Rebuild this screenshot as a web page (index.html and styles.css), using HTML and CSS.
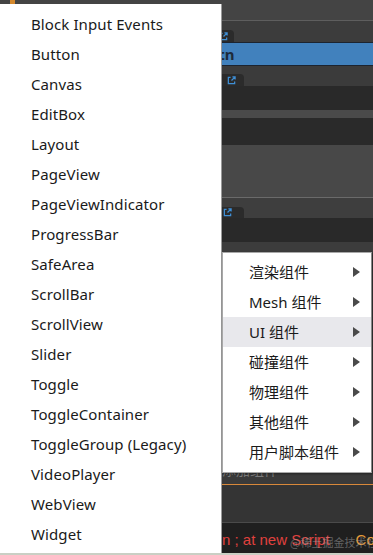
FILE: index.html
```html
<!DOCTYPE html>
<html lang="zh-CN">
<head>
    <meta charset="UTF-8">
    <meta name="viewport" content="width=device-width, initial-scale=1.0">
    <title>Add Component Menu</title>
    <link rel="stylesheet" href="styles.css">
</head>
<body>
    <!-- Editor panels behind the menu -->
    <div class="editor">
        <div class="row top-bar">
            <span class="node-icon"></span>
            <span class="node-title">startBtn</span>
        </div>
        <div class="row line-light"></div>
        <div class="row tab-row">
            <span class="tab tab-small">
                <svg class="link-icon" viewBox="0 0 10 10"><path d="M4 1.5H1.5v7h7V6" /><path d="M5 5l4-4M6 1h3v3" /></svg>
            </span>
        </div>
        <div class="row node-bar"><span class="node-bar-text">startBtn</span></div>
        <div class="row tab-row tab-row-b">
            <span class="tab">
                <svg class="link-icon" viewBox="0 0 10 10"><path d="M4 1.5H1.5v7h7V6" /><path d="M5 5l4-4M6 1h3v3" /></svg>
            </span>
        </div>
        <div class="row field"></div>
        <div class="row band"></div>
        <div class="row field field-b"></div>
        <div class="row panel"></div>
        <div class="row line-mid"></div>
        <div class="row tab-row tab-row-c">
            <span class="tab">
                <svg class="link-icon" viewBox="0 0 10 10"><path d="M4 1.5H1.5v7h7V6" /><path d="M5 5l4-4M6 1h3v3" /></svg>
            </span>
        </div>
        <div class="row field field-c"></div>
        <div class="row under"></div>
        <div class="row add-row"><span class="add-text">添加组件</span></div>
        <div class="row line-orange"></div>
        <div class="row console"></div>
        <div class="row line-dark"></div>
        <div class="row log">
            <span class="log-error">n ; at new Script</span>
            <span class="log-warn">Co</span>
            <span class="watermark">@稀土掘金技术社区</span>
        </div>
        <div class="row foot"></div>
    </div>

    <!-- Component list -->
    <ul class="menu main-menu">
        <li>Block Input Events</li>
        <li>Button</li>
        <li>Canvas</li>
        <li>EditBox</li>
        <li>Layout</li>
        <li>PageView</li>
        <li>PageViewIndicator</li>
        <li>ProgressBar</li>
        <li>SafeArea</li>
        <li>ScrollBar</li>
        <li>ScrollView</li>
        <li>Slider</li>
        <li>Toggle</li>
        <li>ToggleContainer</li>
        <li>ToggleGroup (Legacy)</li>
        <li>VideoPlayer</li>
        <li>WebView</li>
        <li>Widget</li>
    </ul>

    <!-- Category menu -->
    <ul class="menu sub-menu">
        <li class="has-arrow">渲染组件</li>
        <li class="has-arrow">Mesh 组件</li>
        <li class="has-arrow active">UI 组件</li>
        <li class="has-arrow">碰撞组件</li>
        <li class="has-arrow">物理组件</li>
        <li class="has-arrow">其他组件</li>
        <li class="has-arrow">用户脚本组件</li>
    </ul>
</body>
</html>
```

FILE: styles.css
```css
body {
    margin: 0;
    padding: 0;
    width: 373px;
    height: 555px;
    overflow: hidden;
    position: relative;
    background-color: #3a3a3a;
    font-family: 'Noto Sans', 'Noto Sans CJK SC', sans-serif;
}
.editor {
    display: flex;
    flex-direction: column;
}
.row {
    flex: none;
    position: relative;
}
.top-bar {
    height: 20px;
    background-color: #444;
    display: flex;
    align-items: flex-start;
    padding-left: 10px;
    gap: 8px;
    overflow: hidden;
}
.node-icon {
    width: 5px;
    height: 9px;
    margin-top: -5px;
    background-color: #d4882c;
}
.node-title {
    margin-top: -16px;
    font-size: 15px;
    font-weight: bold;
    color: #a0a0a0;
}
.line-light {
    height: 1px;
    background-color: #5e5e5e;
}
.tab-row {
    height: 21px;
    background-color: #3c3c3c;
    display: flex;
    align-items: flex-end;
}
.tab {
    width: 244px;
    height: 12px;
    background-color: #2b2b2b;
    border-radius: 0 4px 0 0;
    display: flex;
    justify-content: flex-end;
    align-items: center;
    padding-right: 8px;
    box-sizing: border-box;
}
.tab-small {
    width: 234px;
    padding-right: 6px;
}
.link-icon {
    width: 9px;
    height: 9px;
    fill: none;
    stroke: #3f8fd6;
    stroke-width: 1.4;
}
.node-bar {
    height: 22px;
    background-color: #4181bd;
    border-top: 1px solid #1c2430;
    border-bottom: 1px solid #1c2430;
    display: flex;
    align-items: center;
}
.node-bar-text {
    padding-left: 172px;
    font-size: 15px;
    font-weight: bold;
    color: #1d2b3a;
}
.tab-row-b {
    height: 20px;
    background-color: #3b3b3b;
}
.field {
    height: 24px;
    background-color: #292929;
}
.band {
    height: 8px;
    background-color: #4a4a4a;
}
.field-b {
    height: 27px;
    background-color: #2a2a2a;
}
.panel {
    height: 52px;
    background-color: #484848;
}
.line-mid {
    height: 1px;
    background-color: #6a6a6a;
}
.tab-row-c {
    height: 20px;
    background-color: #3e3e3e;
}
.tab-row-c .tab {
    height: 11px;
    padding-right: 12px;
}
.field-c {
    height: 24px;
    background-color: #292929;
}
.under {
    height: 230px;
    background-color: #3c3c3c;
}
.add-row {
    height: 12px;
    background-color: #3a3a3a;
    overflow: hidden;
}
.add-text {
    position: absolute;
    left: 222px;
    top: -13px;
    font-size: 14px;
    color: #7a7a7a;
}
.line-orange {
    height: 1px;
    background-color: #d8883a;
}
.console {
    height: 37px;
    background-color: #343434;
}
.line-dark {
    height: 1px;
    background-color: #4a4a4a;
}
.log {
    height: 30px;
    background-color: #1f1f1f;
    display: flex;
    align-items: center;
    padding: 3px 0 0 222px;
    box-sizing: border-box;
    gap: 26px;
    font-family: 'Liberation Sans', sans-serif;
    font-size: 15px;
    white-space: nowrap;
}
.log-error {
    color: #e0413e;
}
.log-warn {
    color: #e39a3a;
}
.watermark {
    position: absolute;
    left: 290px;
    top: 11px;
    font-family: 'Noto Sans CJK SC', sans-serif;
    font-size: 11px;
    color: rgba(170, 170, 170, 0.5);
}
.foot {
    height: 3px;
    background-color: #c9cfc4;
}
.menu {
    position: absolute;
    margin: 0;
    list-style: none;
    background-color: #fff;
    color: #1a1a1a;
    font-size: 15px;
}
.menu li {
    height: 30px;
    line-height: 30px;
    white-space: nowrap;
}
.main-menu {
    left: 0;
    top: 4px;
    width: 221px;
    padding: 5px 0 4px 0;
    border-right: 1px solid #9a9a9a;
}
.main-menu li {
    padding-left: 31px;
    letter-spacing: 0.1px;
}
.sub-menu {
    left: 222px;
    top: 252px;
    width: 148px;
    padding: 4px 0 5px 0;
    border: 1px solid #a8a8a8;
    border-right-color: #888;
    box-shadow: 1px 1px 2px rgba(0, 0, 0, 0.4);
}
.sub-menu li {
    padding-left: 26px;
    position: relative;
}
.sub-menu li.active {
    background-color: #e8e8ec;
}
.has-arrow::after {
    content: "";
    position: absolute;
    right: 11px;
    top: 10px;
    border-left: 7px solid #4a4a4a;
    border-top: 5px solid transparent;
    border-bottom: 5px solid transparent;
}
```
